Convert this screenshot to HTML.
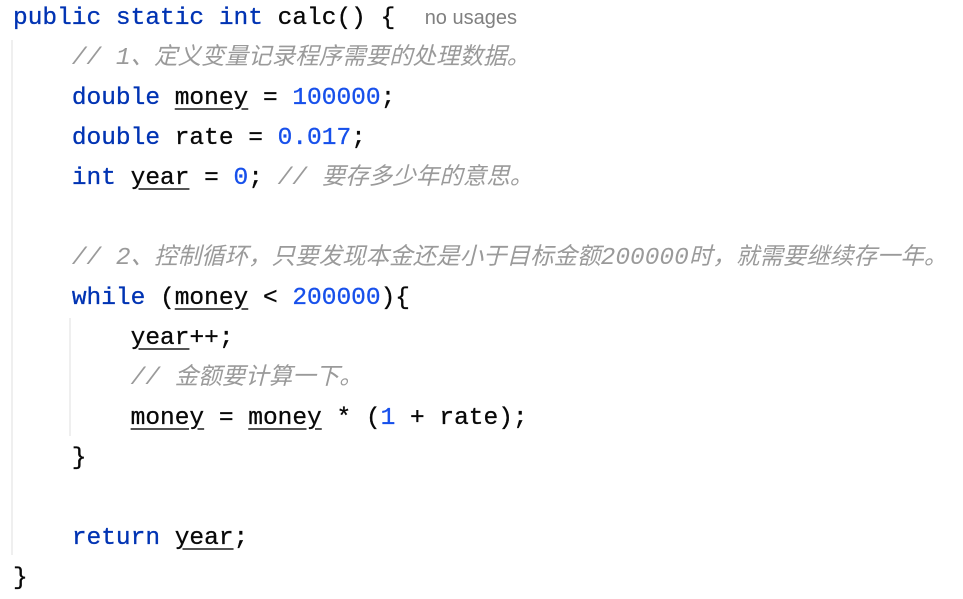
<!DOCTYPE html>
<html><head><meta charset="utf-8"><style>
html,body{margin:0;padding:0;background:#fff;width:963px;height:598px;overflow:hidden}
.code{position:absolute;left:13px;top:-2px;font-family:"Liberation Mono","Noto Sans CJK SC",monospace;font-size:24.5px;line-height:40px;color:#080808;white-space:pre;-webkit-text-stroke:0.3px currentColor}
.k{color:#0033b3}.n{color:#1750eb}
.c{color:#9a9a9a;font-style:italic;-webkit-text-stroke:0}
.c .z{font-size:23.5px}
.u{text-decoration:underline;text-decoration-color:#555;text-underline-offset:4px}
.h{font-family:"Liberation Sans",sans-serif;color:#808080;font-size:20px;-webkit-text-stroke:0}
.g{position:absolute;width:2px;background:#efefef}
</style></head><body>
<div class="g" style="left:11px;top:40px;height:515px"></div>
<div class="g" style="left:69px;top:318px;height:118px"></div>
<div class="code"><span class="k">public static int</span> calc() {  <span class="h">no usages</span>
    <span class="c">// 1<span class="z">、定义变量记录程序需要的处理数据。</span></span>
    <span class="k">double</span> <span class="u">money</span> = <span class="n">100000</span>;
    <span class="k">double</span> rate = <span class="n">0.017</span>;
    <span class="k">int</span> <span class="u">year</span> = <span class="n">0</span>; <span class="c">// <span class="z">要存多少年的意思。</span></span>

    <span class="c">// 2<span class="z">、控制循环，只要发现本金还是小于目标金额</span>200000<span class="z">时，就需要继续存一年。</span></span>
    <span class="k">while</span> (<span class="u">money</span> &lt; <span class="n">200000</span>){
        <span class="u">year</span>++;
        <span class="c">// <span class="z">金额要计算一下。</span></span>
        <span class="u">money</span> = <span class="u">money</span> * (<span class="n">1</span> + rate);
    }

    <span class="k">return</span> <span class="u">year</span>;
}</div>
</body></html>
